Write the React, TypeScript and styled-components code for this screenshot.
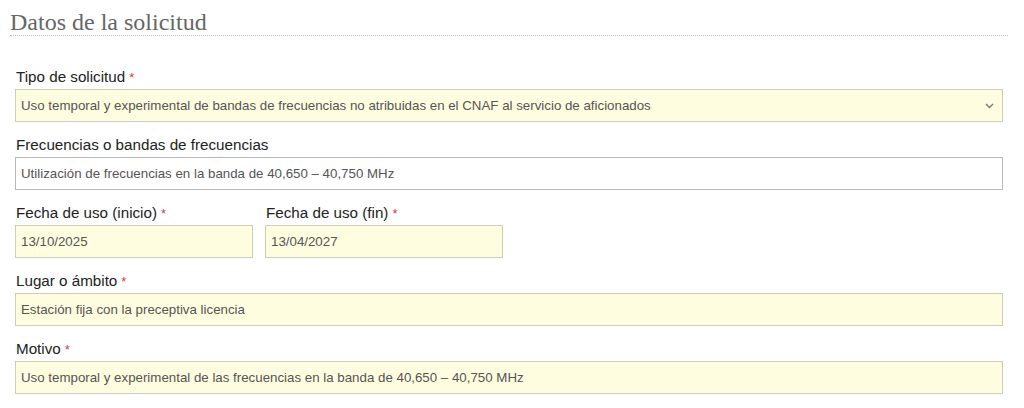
import React from "react";
import styled, { createGlobalStyle } from "styled-components";

const GlobalStyle = createGlobalStyle`
  html, body {
    margin: 0;
    padding: 0;
    background: #fff;
  }
  body {
    font-family: "Liberation Sans", Arial, sans-serif;
  }
`;

const fieldBg = "#fffde0";

const Page = styled.div`
  width: 998px;
  padding: 0 16px 0 10px;
`;

const Title = styled.h2`
  margin: 0;
  padding-top: 9px;
  font-family: "Liberation Serif", Georgia, serif;
  font-weight: normal;
  font-size: 24px;
  line-height: 26px;
  color: #666;
  border-bottom: 1px dotted #c4c4c4;
`;

const Form = styled.div`
  padding: 32px 5px 0 5px;
  display: flex;
  flex-direction: column;
  gap: 14px;
`;

const Field = styled.div<{ $width?: number }>`
  display: flex;
  flex-direction: column;
  gap: 3px;
  width: ${(p) => (p.$width ? `${p.$width}px` : "100%")};
`;

const Row = styled.div`
  display: flex;
  gap: 12px;
`;

const Label = styled.label`
  display: block;
  height: 18px;
  font-size: 15.2px;
  line-height: 18px;
  color: #222;
  padding-left: 1px;
`;

const Req = styled.span`
  color: #de3a3a;
  font-size: 13px;
  line-height: 0;
  margin-left: 4px;
`;

const Box = styled.div<{ $required?: boolean }>`
  box-sizing: border-box;
  height: 33px;
  display: flex;
  align-items: center;
  padding: 0 5px;
  font-size: 13.3px;
  color: #555;
  background: ${(p) => (p.$required ? fieldBg : "#fff")};
  border: 1px solid ${(p) => (p.$required ? "#cfcdb8" : "#b9b9b9")};
  white-space: nowrap;
  overflow: hidden;
`;

const SelectBox = styled(Box)`
  justify-content: space-between;
  padding-right: 8px;
`;

const Chevron = () => (
  <svg width="9" height="6" viewBox="0 0 9 6">
    <path d="M1 1 L4.5 4.5 L8 1" fill="none" stroke="#777" strokeWidth="1.4" />
  </svg>
);

export default function App() {
  return (
    <Page>
      <GlobalStyle />
      <Title>Datos de la solicitud</Title>
      <Form>
        <Field>
          <Label>
            Tipo de solicitud<Req>*</Req>
          </Label>
          <SelectBox $required>
            <span>
              Uso temporal y experimental de bandas de frecuencias no atribuidas en el CNAF al
              servicio de aficionados
            </span>
            <Chevron />
          </SelectBox>
        </Field>
        <Field>
          <Label>Frecuencias o bandas de frecuencias</Label>
          <Box>Utilización de frecuencias en la banda de 40,650 – 40,750 MHz</Box>
        </Field>
        <Row>
          <Field $width={238}>
            <Label>
              Fecha de uso (inicio)<Req>*</Req>
            </Label>
            <Box $required>13/10/2025</Box>
          </Field>
          <Field $width={238}>
            <Label>
              Fecha de uso (fin)<Req>*</Req>
            </Label>
            <Box $required>13/04/2027</Box>
          </Field>
        </Row>
        <Field>
          <Label>
            Lugar o ámbito<Req>*</Req>
          </Label>
          <Box $required>Estación fija con la preceptiva licencia</Box>
        </Field>
        <Field>
          <Label>
            Motivo<Req>*</Req>
          </Label>
          <Box $required>
            Uso temporal y experimental de las frecuencias en la banda de 40,650 – 40,750 MHz
          </Box>
        </Field>
      </Form>
    </Page>
  );
}
